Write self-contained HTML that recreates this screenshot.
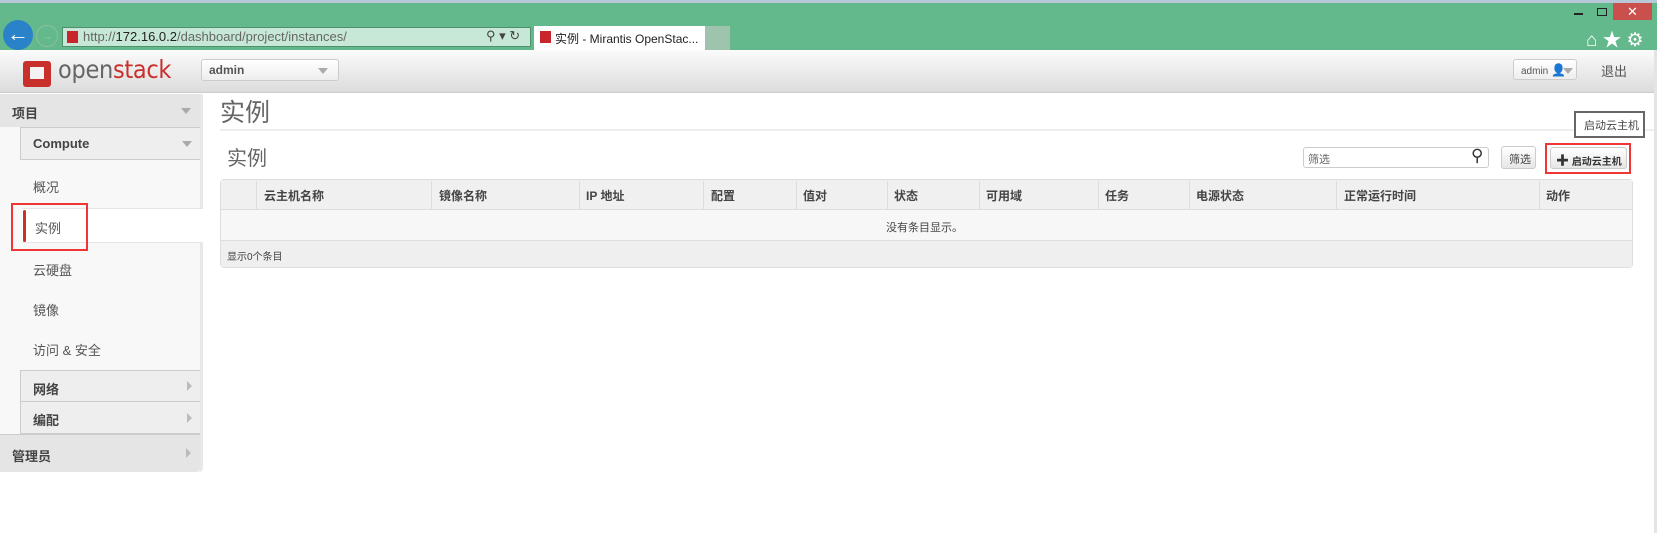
<!DOCTYPE html>
<html><head><meta charset="utf-8"><style>
*{margin:0;padding:0;box-sizing:border-box}
body{width:1657px;height:533px;overflow:hidden;background:#fff;font-family:"Liberation Sans","Noto Sans CJK SC",sans-serif;position:relative;color:#333}
.a{position:absolute}
.t{font-size:12px;color:#555;white-space:nowrap}
.s{font-size:13px}
.b{font-weight:bold;color:#444}
.tri{width:0;height:0;border-left:5px solid transparent;border-right:5px solid transparent;border-top:6px solid #aaa}
.rt{width:0;height:0;border-top:5px solid transparent;border-bottom:5px solid transparent;border-left:5px solid #bbb}
.cb{position:absolute;top:181px;width:1px;height:29px;background:#ddd}
.h{position:absolute;top:187px;font-size:12px;font-weight:bold;color:#444;white-space:nowrap}
</style></head><body>
<div class="a" style="left:0;top:0;width:1657px;height:3px;background:#b8c8d8"></div>
<div class="a" style="left:0;top:3px;width:1657px;height:47px;background:#63b98b"></div>
<div class="a" style="left:1613px;top:3px;width:39px;height:17px;background:#c9504c;color:#fff;font-size:13px;text-align:center;line-height:17px">✕</div>
<div class="a" style="left:1574px;top:13px;width:9px;height:2px;background:#222"></div>
<div class="a" style="left:1597px;top:8px;width:10px;height:8px;border:1.5px solid #222"></div>
<div class="a" style="left:1586px;top:25px;color:#fff;font-size:19px;letter-spacing:5px">⌂★⚙</div>
<div class="a" style="left:3px;top:20px;width:30px;height:30px;border-radius:50%;background:#2a82c8;color:#fff;font-size:22px;text-align:center;line-height:28px;font-weight:bold">←</div>
<div class="a" style="left:36px;top:25px;width:22px;height:22px;border-radius:50%;border:1px solid #8fbf9f;color:#8fbf9f;font-size:13px;text-align:center;line-height:20px">→</div>
<div class="a" style="left:62px;top:27px;width:469px;height:20px;background:#c7e8d6;border:1px solid #4f8f6b"></div>
<div class="a" style="left:67px;top:31px;width:11px;height:12px;background:#c8262c"></div>
<div class="a t" style="left:83px;top:29px;font-size:13px;color:#666">http://<span style="color:#222">172.16.0.2</span>/dashboard/project/instances/</div>
<div class="a t" style="left:486px;top:28px;font-size:13px;color:#444">⚲ ▾ ↻</div>
<div class="a" style="left:534px;top:26px;width:171px;height:24px;background:#fff"></div>
<div class="a" style="left:540px;top:31px;width:11px;height:12px;background:#c8262c"></div>
<div class="a t" style="left:555px;top:30px;font-size:12px;color:#222">实例 - Mirantis OpenStac... <span style="color:#777;margin-left:3px">✕</span></div>
<div class="a" style="left:705px;top:26px;width:25px;height:24px;background:#9ec4ae"></div>
<!-- header -->
<div class="a" style="left:0;top:50px;width:1657px;height:43px;background:linear-gradient(#fbfbfb,#dcdcdc);border-bottom:1px solid #ccc"></div>
<div class="a" style="left:23px;top:61px;width:28px;height:26px;background:#c9302c;border-radius:3px"></div>
<div class="a" style="left:30px;top:67px;width:14px;height:12px;background:#f3f3f3"></div>
<div class="a" style="left:58px;top:55px;font-size:25px;color:#666;font-family:'DejaVu Sans Condensed','Liberation Sans',sans-serif;letter-spacing:-0.3px">open<span style="color:#c9302c">stack</span></div>
<div class="a" style="left:201px;top:59px;width:138px;height:22px;background:linear-gradient(#fff,#eee);border:1px solid #ccc;border-radius:3px"></div>
<div class="a t b" style="left:209px;top:63px;font-size:12px;color:#555">admin</div>
<div class="a tri" style="left:318px;top:68px"></div>
<div class="a" style="left:1513px;top:59px;width:64px;height:21px;background:linear-gradient(#fff,#eee);border:1px solid #ccc;border-radius:3px"></div>
<div class="a t" style="left:1521px;top:63px;font-size:10px;color:#555">admin <span style="color:#222;font-size:12px">👤</span></div>
<div class="a tri" style="left:1563px;top:68px"></div>
<div class="a t" style="left:1601px;top:61px;font-size:13px;color:#555">退出</div>
<!-- sidebar -->
<div class="a" style="left:0;top:94px;width:203px;height:378px;background:#f8f8f8;border-right:3px solid #e8e8e8;border-radius:0 0 4px 0"></div>
<div class="a" style="left:0;top:94px;width:200px;height:33px;background:#e5e5e5"></div>
<div class="a t b s" style="left:12px;top:103px">项目</div>
<div class="a tri" style="left:181px;top:108px"></div>
<div class="a" style="left:20px;top:127px;width:180px;height:33px;background:#eee;border:1px solid #ccc;border-right:none"></div>
<div class="a t b s" style="left:33px;top:136px">Compute</div>
<div class="a tri" style="left:182px;top:141px"></div>
<div class="a t s" style="left:33px;top:177px">概况</div>
<div class="a" style="left:22px;top:208px;width:181px;height:35px;background:#fff;border-top:1px solid #e5e5e5;border-bottom:1px solid #e5e5e5"></div>
<div class="a" style="left:23px;top:210px;width:3px;height:32px;background:#c9302c;border-radius:2px"></div>
<div class="a t s" style="left:35px;top:218px">实例</div>
<div class="a" style="left:11px;top:203px;width:77px;height:48px;border:2px solid #f03535"></div>
<div class="a t s" style="left:33px;top:260px">云硬盘</div>
<div class="a t s" style="left:33px;top:300px">镜像</div>
<div class="a t s" style="left:33px;top:340px">访问 &amp; 安全</div>
<div class="a" style="left:20px;top:370px;width:180px;height:32px;background:#eee;border:1px solid #ccc;border-right:none"></div>
<div class="a t b s" style="left:33px;top:379px">网络</div>
<div class="a rt" style="left:187px;top:381px"></div>
<div class="a" style="left:20px;top:402px;width:180px;height:32px;background:#eee;border:1px solid #ccc;border-right:none;border-top:none"></div>
<div class="a t b s" style="left:33px;top:410px">编配</div>
<div class="a rt" style="left:187px;top:413px"></div>
<div class="a" style="left:0;top:434px;width:200px;height:38px;background:#e5e5e5;border-top:1px solid #ccc;border-radius:0 0 4px 0"></div>
<div class="a t b s" style="left:12px;top:446px">管理员</div>
<div class="a rt" style="left:186px;top:448px"></div>
<!-- content -->
<div class="a" style="left:220px;top:93px;font-size:25px;color:#666">实例</div>
<div class="a" style="left:220px;top:129px;width:1437px;height:2px;background:#eee"></div>
<div class="a" style="left:227px;top:142px;font-size:20px;color:#666">实例</div>
<div class="a" style="left:1574px;top:111px;width:71px;height:27px;border:2px solid #666;background:#fff"></div>
<div class="a t" style="left:1584px;top:117px;font-size:11px;color:#444">启动云主机</div>
<div class="a" style="left:1303px;top:147px;width:186px;height:21px;border:1px solid #ccc;border-radius:3px;background:#fff"></div>
<div class="a t" style="left:1308px;top:151px;font-size:11px;color:#666">筛选</div>
<div class="a" style="left:1471px;top:146px;font-size:17px;color:#333">⚲</div>
<div class="a" style="left:1501px;top:146px;width:35px;height:23px;border:1px solid #ccc;border-radius:3px;background:linear-gradient(#fff,#e6e6e6)"></div>
<div class="a t" style="left:1509px;top:151px;font-size:11px;color:#444">筛选</div>
<div class="a" style="left:1545px;top:143px;width:86px;height:31px;border:2px solid #f03535"></div>
<div class="a" style="left:1550px;top:147px;width:77px;height:22px;border:1px solid #ccc;border-radius:3px;background:linear-gradient(#fff,#e6e6e6)"></div>
<div class="a t b" style="left:1556px;top:150px;font-size:10px;color:#333"><span style="font-size:13px">✚</span> 启动云主机</div>
<!-- table -->
<div class="a" style="left:220px;top:179px;width:1413px;height:89px;border:1px solid #ddd;border-radius:4px;background:#f7f7f7"></div>
<div class="a" style="left:221px;top:180px;width:1411px;height:30px;background:#f0f0f0;border-bottom:1px solid #ddd"></div>
<div class="a" style="left:221px;top:240px;width:1411px;height:27px;background:#efefef;border-top:1px solid #ddd"></div>
<div class="a t" style="left:886px;top:219px;font-size:11px;color:#444">没有条目显示。</div>
<div class="a t" style="left:227px;top:248px;font-size:10px;color:#444">显示0个条目</div>
<div class="cb" style="left:256px"></div><div class="h" style="left:264px">云主机名称</div>
<div class="cb" style="left:431px"></div><div class="h" style="left:439px">镜像名称</div>
<div class="cb" style="left:579px"></div><div class="h" style="left:586px">IP 地址</div>
<div class="cb" style="left:703px"></div><div class="h" style="left:711px">配置</div>
<div class="cb" style="left:796px"></div><div class="h" style="left:803px">值对</div>
<div class="cb" style="left:887px"></div><div class="h" style="left:894px">状态</div>
<div class="cb" style="left:979px"></div><div class="h" style="left:986px">可用域</div>
<div class="cb" style="left:1098px"></div><div class="h" style="left:1105px">任务</div>
<div class="cb" style="left:1189px"></div><div class="h" style="left:1196px">电源状态</div>
<div class="cb" style="left:1336px"></div><div class="h" style="left:1344px">正常运行时间</div>
<div class="cb" style="left:1539px"></div><div class="h" style="left:1546px">动作</div>
<div class="a" style="left:1654px;top:50px;width:3px;height:483px;background:#e4e4e4"></div>
</body></html>
